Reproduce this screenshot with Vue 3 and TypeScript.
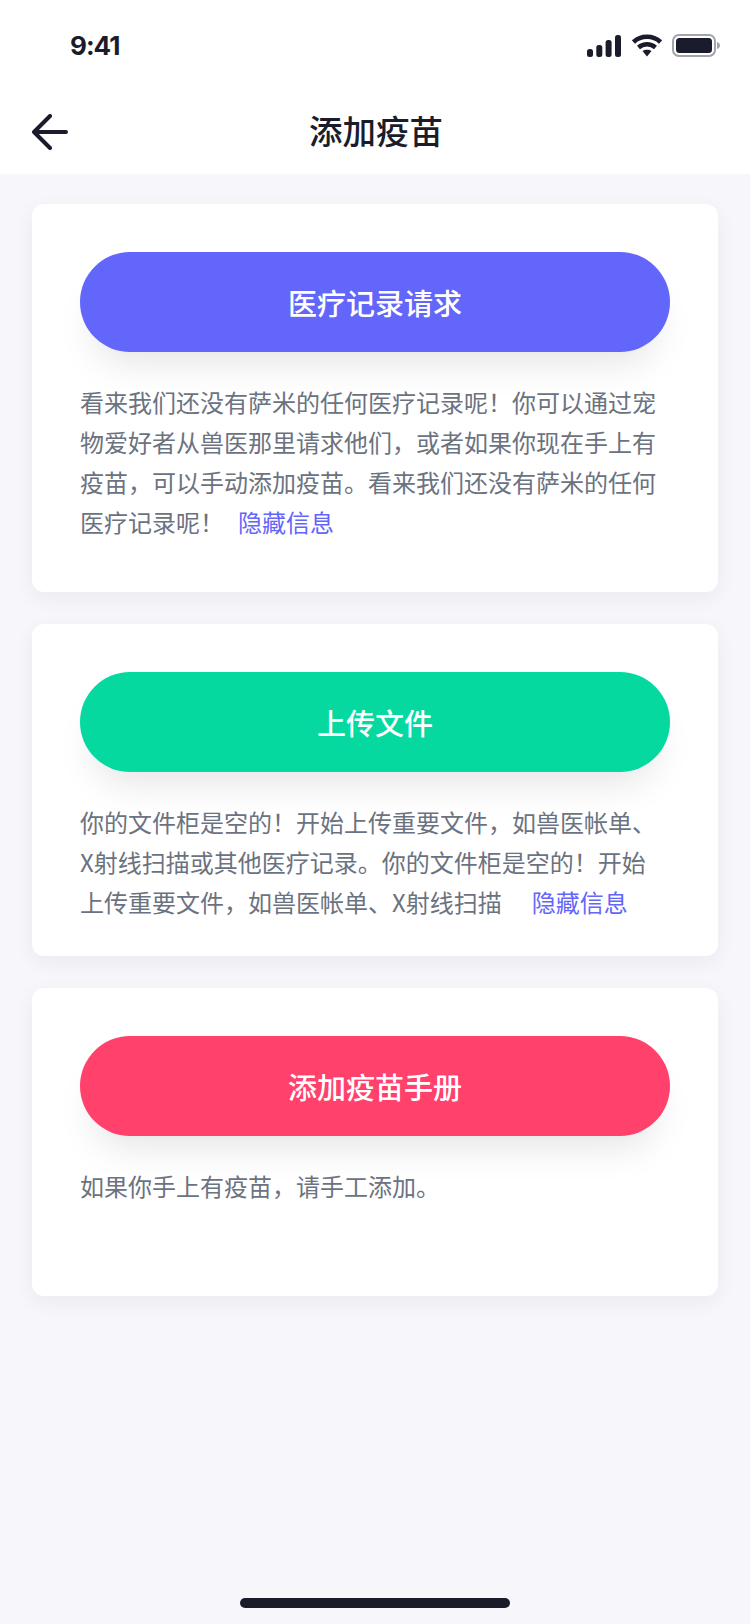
<template>
  <div class="page">
    <div class="status-bar">
      <span class="time">9:41</span>
      <div class="status-icons">
        <svg width="34" height="22" viewBox="0 0 34 22">
          <rect x="0" y="14" width="6" height="8" rx="2.5" />
          <rect x="9.3" y="10" width="6" height="12" rx="2.5" />
          <rect x="18.600" y="5" width="6" height="17" rx="2.5" />
          <rect x="28" y="0" width="6" height="22" rx="2.5" />
        </svg>
        <svg width="30" height="23" viewBox="0 0 30 23">
          <path class="wave" d="M1.500 8C9 1 21 1 28.500 8" />
          <path class="wave" d="M6.500 13.500C11.500 9.300 18.500 9.300 23.500 13.500" />
          <path d="M10.500 17C13 15.200 17 15.200 19.500 17L15 22.500Z" />
        </svg>
        <svg width="49" height="23" viewBox="0 0 49 23">
          <rect class="batt-border" x="1" y="1" width="42" height="21" rx="6" />
          <rect x="4" y="4" width="36" height="15" rx="3.500" />
          <path class="batt-cap" d="M45 8C47 8.500 48 10 48 11.500C48 13 47 14.500 45 15Z" />
        </svg>
      </div>
    </div>

    <header class="nav">
      <svg class="back" width="36" height="36" viewBox="0 0 36 36">
        <path d="M34 18H2M18 2L2 18L18 34" />
      </svg>
      <h1>添加疫苗</h1>
    </header>

    <main class="list">
      <section v-for="card in cards" :key="card.button" class="card" :class="{ compact: card.compact }">
        <button class="action" :class="card.tone">{{ card.button }}</button>
        <p class="desc">
          <template v-for="(line, i) in card.lines" :key="i"><br v-if="i > 0" />{{ line }}</template>
          <a v-if="card.link" class="more" :class="{ wide: card.compact }">隐藏信息</a>
        </p>
      </section>
    </main>

    <div class="home-bar"></div>
  </div>
</template>

<script setup lang="ts">
const cards = [
  {
    button: "医疗记录请求",
    tone: "blue",
    lines: [
      "看来我们还没有萨米的任何医疗记录呢！你可以通过宠",
      "物爱好者从兽医那里请求他们，或者如果你现在手上有",
      "疫苗，可以手动添加疫苗。看来我们还没有萨米的任何",
      "医疗记录呢！",
    ],
    link: true,
    compact: false,
  },
  {
    button: "上传文件",
    tone: "green",
    lines: [
      "你的文件柜是空的！开始上传重要文件，如兽医帐单、",
      "X射线扫描或其他医疗记录。你的文件柜是空的！开始",
      "上传重要文件，如兽医帐单、X射线扫描",
    ],
    link: true,
    compact: true,
  },
  {
    button: "添加疫苗手册",
    tone: "red",
    lines: ["如果你手上有疫苗，请手工添加。"],
    link: false,
    compact: false,
  },
];
</script>

<style>
html,
body {
  margin: 0;
  background: #f6f6fb;
}
</style>

<style scoped>
.page {
  position: relative;
  display: flex;
  flex-direction: column;
  height: 1624px;
  overflow: hidden;
  background: #f6f6fb;
  font-family: "Noto Sans CJK SC", "Noto Sans", sans-serif;
  color: #1a1c2b;
}
.status-bar {
  display: flex;
  justify-content: space-between;
  align-items: center;
  height: 88px;
  padding: 3px 29px 0 70px;
  box-sizing: border-box;
  background: #fff;
}
.time {
  font-family: Inter, sans-serif;
  font-size: 26px;
  font-weight: 700;
  letter-spacing: -1px;
}
.status-icons {
  display: flex;
  align-items: center;
  gap: 10.5px;
  fill: #1a1c2b;
}
.wave {
  fill: none;
  stroke: #1a1c2b;
  stroke-width: 4.500;
}
.batt-border {
  fill: none;
  stroke: #a3a3a8;
  stroke-width: 2;
}
.batt-cap {
  fill: #a3a3a8;
}
.nav {
  position: relative;
  display: flex;
  align-items: center;
  justify-content: center;
  height: 86px;
  padding: 0 0 2px 2px;
  box-sizing: border-box;
  background: #fff;
}
.back {
  position: absolute;
  left: 32px;
  top: 26px;
  fill: none;
  stroke: #1a1c2b;
  stroke-width: 4;
  stroke-linecap: round;
  stroke-linejoin: round;
}
.nav h1 {
  margin: 0;
  font-size: 33.5px;
  font-weight: 500;
  line-height: 1;
}
.list {
  display: flex;
  flex-direction: column;
  gap: 32px;
  padding: 30px 32px 0;
}
.card {
  padding: 48px;
  background: #fff;
  border-radius: 12px;
  box-shadow: 0 6px 20px rgba(26, 28, 43, 0.06);
}
.card.compact {
  padding-bottom: 32px;
}
.action {
  display: block;
  width: 100%;
  height: 100px;
  border: 0;
  border-radius: 50px;
  font-family: inherit;
  font-size: 29px;
  font-weight: 500;
  color: #fff;
  box-shadow: 0 24px 36px -12px rgba(0, 0, 0, 0.1);
}
.blue {
  background: #6366fa;
}
.green {
  background: #05d9a0;
}
.red {
  background: #ff416c;
}
.desc {
  min-height: 80px;
  margin: 30px 0 2px;
  font-size: 24px;
  line-height: 40px;
  color: #6b7280;
}
.more {
  margin-left: 14px;
  color: #6366fa;
}
.more.wide {
  margin-left: 30px;
}
.home-bar {
  position: absolute;
  left: 240px;
  bottom: 16px;
  width: 270px;
  height: 10px;
  border-radius: 5px;
  background: #1a1c2b;
}
</style>
